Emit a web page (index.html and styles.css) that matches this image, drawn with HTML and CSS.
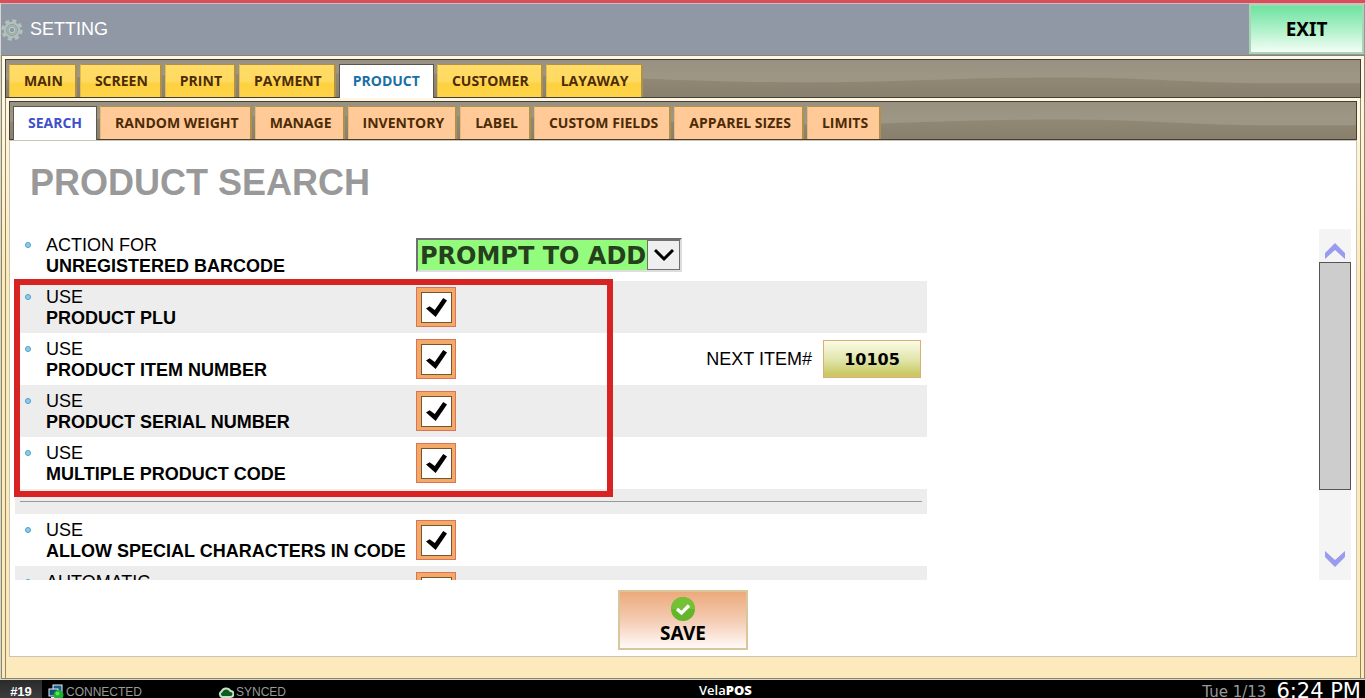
FILE: index.html
```
<!DOCTYPE html>
<html lang="en">
<head>
  <meta charset="UTF-8">
  <meta name="viewport" content="width=device-width, initial-scale=1.0">
  <title>VelaPOS - Setting</title>
  <link rel="stylesheet" href="styles.css">
</head>
<body>
  <!-- Title bar -->
  <header class="titlebar">
    <svg class="gear" viewBox="0 0 24 24">
      <circle cx="12" cy="12" r="10" fill="none" stroke="#b3c2bd" stroke-width="3.400" stroke-dasharray="4.400 3.454"/>
      <circle cx="12" cy="12" r="7" fill="#9fb0ac" stroke="#b0c0bb" stroke-width="4"/>
      <circle cx="12" cy="12" r="6" fill="none" stroke="#8b9c98" stroke-width="1"/>
      <circle cx="12" cy="12" r="3" fill="#8d99a2" stroke="#c6d2cd" stroke-width="1"/>
    </svg>
    <span class="title">SETTING</span>
    <button class="exit" type="button">EXIT</button>
  </header>

  <main class="window">
    <div class="pane">
      <!-- Main tabs -->
      <nav class="strip">
        <svg class="wave" viewBox="0 0 1356 38" preserveAspectRatio="none">
          <path d="M0 20 C200 13 420 12 580 17 C660 20 720 23 800 23 C900 23 950 18 1060 18 C1150 18 1180 24 1280 24 L1356 24 V38 H0 Z" fill="url(#shade)"/>
          <defs>
            <linearGradient id="shade" x1="0" y1="0" x2="0" y2="1">
              <stop offset="0" stop-color="#928a77"/>
              <stop offset="1" stop-color="#88806d"/>
            </linearGradient>
          </defs>
        </svg>
        <button class="tab" type="button">MAIN</button>
        <button class="tab" type="button">SCREEN</button>
        <button class="tab" type="button">PRINT</button>
        <button class="tab" type="button">PAYMENT</button>
        <button class="tab active" type="button">PRODUCT</button>
        <button class="tab" type="button">CUSTOMER</button>
        <button class="tab" type="button">LAYAWAY</button>
      </nav>

      <div class="inner">
        <!-- Product tabs -->
        <nav class="strip sub">
          <svg class="wave" viewBox="0 0 1356 38" preserveAspectRatio="none">
            <path d="M0 20 C200 13 420 12 580 17 C660 20 720 23 800 23 C900 23 950 18 1060 18 C1150 18 1180 24 1280 24 L1356 24 V38 H0 Z" fill="url(#shade)"/>
          </svg>
          <button class="tab active" type="button">SEARCH</button>
          <button class="tab" type="button">RANDOM WEIGHT</button>
          <button class="tab" type="button">MANAGE</button>
          <button class="tab" type="button">INVENTORY</button>
          <button class="tab" type="button">LABEL</button>
          <button class="tab" type="button">CUSTOM FIELDS</button>
          <button class="tab" type="button">APPAREL SIZES</button>
          <button class="tab" type="button">LIMITS</button>
        </nav>

        <section class="panel">
          <h1>PRODUCT SEARCH</h1>

          <div class="scroll-area">
            <div class="options">
              <div class="row">
                <label for="action">ACTION FOR<b>UNREGISTERED BARCODE</b></label>
                <div class="select-box">
                  <select id="action">
                    <option>PROMPT TO ADD</option>
                  </select>
                  <span class="arrow">
                    <svg viewBox="0 0 20 14"><path d="M1 2 L10 11 L19 2" fill="none" stroke="#000" stroke-width="3"/></svg>
                  </span>
                </div>
              </div>
              <div class="row shaded">
                <label for="plu">USE<b>PRODUCT PLU</b></label>
                <input type="checkbox" id="plu" checked>
              </div>
              <div class="row">
                <label for="item">USE<b>PRODUCT ITEM NUMBER</b></label>
                <input type="checkbox" id="item" checked>
                <div class="next-item">
                  <span>NEXT ITEM#</span>
                  <button type="button">10105</button>
                </div>
              </div>
              <div class="row shaded">
                <label for="serial">USE<b>PRODUCT SERIAL NUMBER</b></label>
                <input type="checkbox" id="serial" checked>
              </div>
              <div class="row">
                <label for="multi">USE<b>MULTIPLE PRODUCT CODE</b></label>
                <input type="checkbox" id="multi" checked>
              </div>
              <div class="divider"><hr></div>
              <div class="row">
                <label for="special">USE<b>ALLOW SPECIAL CHARACTERS IN CODE</b></label>
                <input type="checkbox" id="special" checked>
              </div>
              <div class="row shaded">
                <label for="auto">AUTOMATIC</label>
                <input type="checkbox" id="auto">
              </div>
            </div>
            <div class="highlight"></div>

            <div class="scrollbar">
              <button type="button" aria-label="Scroll up">
                <svg viewBox="0 0 20 16"><path d="M0 16 V10 L10 0 L20 10 V16 L10 7 Z" fill="#9a9aee"/></svg>
              </button>
              <div class="track"><div class="thumb"></div></div>
              <button type="button" aria-label="Scroll down">
                <svg viewBox="0 0 20 16"><path d="M0 0 V6 L10 16 L20 6 V0 L10 9 Z" fill="#9a9aee"/></svg>
              </button>
            </div>
          </div>

          <button class="save" type="button">
            <svg viewBox="0 0 24 24">
              <circle cx="12" cy="12" r="12" fill="#63b52a"/>
              <path d="M0 12 A12 12 0 0 1 24 12 Z" fill="#74c136"/>
              <path d="M6 12 L10.500 16 L18 8.500" fill="none" stroke="#fff" stroke-width="3.400"/>
            </svg>
            SAVE
          </button>
        </section>
      </div>
    </div>
  </main>

  <!-- Status bar -->
  <footer class="statusbar">
    <span class="station">#19</span>
    <span class="status connected">
      <svg viewBox="0 0 16 16">
        <rect x="5" y="1" width="9" height="7" fill="#1d5f8c" stroke="#e8f4fa"/>
        <rect x="1" y="5" width="9" height="7" fill="#174e78" stroke="#e8f4fa"/>
        <path d="M3 14 H8" stroke="#e8f4fa" stroke-width="2"/>
        <circle cx="10.500" cy="11" r="5" fill="#19b22b"/>
        <circle cx="9.500" cy="9.500" r="2" fill="#5fe066"/>
      </svg>
      CONNECTED
    </span>
    <span class="status synced">
      <svg viewBox="0 0 16 16">
        <path d="M4 13 A3 3 0 0 1 3.500 7.500 A5 5 0 0 1 12.500 7 A3 3 0 0 1 12.500 13 Z" fill="#0f5a1f" stroke="#c4e2c6" stroke-width="2"/>
      </svg>
      SYNCED
    </span>
    <span class="brand">Vela<b>POS</b></span>
    <span class="date">Tue 1/13</span>
    <span class="time">6:24 PM</span>
  </footer>
</body>
</html>
```
FILE: styles.css
```
*, *::before, *::after {
  box-sizing: border-box;
}
body {
  margin: 0;
  height: 100vh;
  display: flex;
  flex-direction: column;
  overflow: hidden;
  border-top: 3px solid #d94f58;
  background-color: #d9d6cc;
  font-family: "Liberation Sans", Arial, sans-serif;
  font-size: 18px;
  color: #000;
}
button {
  font-family: "Noto Sans", Tahoma, sans-serif;
  font-weight: bold;
  cursor: pointer;
}

/* Title bar */
.titlebar {
  display: flex;
  align-items: center;
  height: 52px;
  margin-left: 1px;
  border-top: 1px solid #d5b8cc;
  background-color: #9098a6;
  color: #fff;
}
.gear {
  width: 22px;
  height: 22px;
  margin-right: 7px;
}
.exit {
  width: 115px;
  height: 50px;
  margin-left: auto;
  margin-right: 1px;
  align-self: flex-start;
  border: 2px solid #a9d5b4;
  background: linear-gradient(#6ee2a0, #b4f2cd 55%, #f4fdf6);
  font-size: 19px;
}

/* Window and tabs */
.window {
  flex: 1;
  min-height: 0;
  display: flex;
  margin: 0 0 1px 1px;
  padding: 3px 3px 0;
  border: 1px solid #8b8568;
  background: linear-gradient(#fff8e8, #fff6e0 60px, #fceabd 220px);
}
.pane {
  flex: 1;
  display: flex;
  flex-direction: column;
  min-width: 0;
  border: 1px solid #94855a;
  border-width: 0 1px;
}
.strip {
  position: relative;
  display: flex;
  align-items: flex-end;
  gap: 3px;
  height: 39px;
  margin: 0 -1px;
  padding: 0 3px;
  border: 1px solid #463d34;
  background: linear-gradient(#989080, #9e9685 40%);
}
.wave {
  position: absolute;
  left: 0;
  top: 0;
  width: 100%;
  height: 100%;
}
.tab {
  position: relative;
  height: 33px;
  padding: 0 12px 2px 14px;
  border: 1px solid #b0914a;
  border-right-width: 2px;
  border-bottom: none;
  border-left-color: #e3bd4c;
  background: linear-gradient(#ffdc68, #ffda60 50%, #fdd13e 60%, #fed34a);
  color: #4d2b06;
  font-family: "Open Sans", "Segoe UI", sans-serif;
  font-size: 14px;
}
.tab.active {
  height: 34px;
  margin-bottom: -1px;
  padding: 0 13px 2px;
  border: 1px solid #5d564b;
  border-bottom: none;
  background: #fff;
  color: #1a6fa5;
}
.sub .tab {
  padding-right: 11px;
  background: #ffca98;
  border-left-color: #eab973;
}
.sub .tab.active {
  padding: 0 14px 2px;
  background: #fff;
  border-left-color: #5d564b;
  color: #4050c8;
}
.inner {
  flex: 1;
  min-height: 0;
  display: flex;
  flex-direction: column;
  padding: 3px 3px 21px;
}
.sub {
  margin: 0;
}

/* Panel */
.panel {
  flex: 1;
  min-height: 0;
  display: flex;
  flex-direction: column;
  padding: 21px 5px 6px;
  border: 1px solid #c9c5b4;
  background-color: #fff;
}
h1 {
  margin: 0 0 25px 15px;
  color: #999;
  font-size: 36px;
  line-height: 42px;
}
.scroll-area {
  position: relative;
  flex: 1;
  min-height: 0;
  display: flex;
  justify-content: space-between;
}
.options {
  width: 912px;
  overflow: hidden;
}
.row {
  position: relative;
  display: flex;
  align-items: center;
  height: 52px;
  padding: 0 6px 0 31px;
}
.row::before {
  content: "";
  position: absolute;
  left: 10px;
  top: 13px;
  width: 6px;
  height: 6px;
  border: 1px solid #4b9dcb;
  border-radius: 50%;
  background-color: #8fcdee;
}
.shaded, .divider {
  background-color: #ededed;
}
.row label {
  align-self: flex-start;
  width: 370px;
  padding-top: 6px;
  line-height: 21px;
}
.row label b {
  display: block;
}
.divider {
  height: 25px;
  padding: 12px 5px 0;
}
.divider hr {
  margin: 0;
  border: none;
  border-top: 1px solid #999;
}

/* Orange tick boxes */
.row input {
  appearance: none;
  display: grid;
  grid-template: 100% / 100%;
  place-items: center;
  width: 40px;
  height: 40px;
  margin: 0;
  padding: 1px 0 0 1px;
  border: 1px solid #d9735a;
  background-color: #f5a966;
}
.row input::before {
  content: "";
  grid-area: 1 / 1;
  width: 31px;
  height: 31px;
  border: 1px solid #75572f;
  background-color: #fff;
}
.row input:checked::after {
  content: "";
  grid-area: 1 / 1;
  width: 21px;
  height: 19px;
  background-color: #000;
  clip-path: polygon(0 55%, 17% 43%, 42% 63%, 82% 0, 100% 13%, 46% 100%);
}

.select-box {
  position: relative;
  width: 266px;
}
.select-box select {
  appearance: none;
  display: block;
  width: 100%;
  height: 34px;
  padding: 2px 0 0 2px;
  border: 2px solid #6f6f6f;
  border-right-color: #ddd;
  border-bottom-color: #ddd;
  border-radius: 0;
  background-color: #94fc7c;
  color: #24401d;
  font: bold 24px "DejaVu Sans", Verdana, sans-serif;
}
.arrow {
  position: absolute;
  top: 2px;
  right: 2px;
  width: 33px;
  height: 30px;
  display: grid;
  place-items: center;
  border: 1px solid #707070;
  background-color: #efefef;
  pointer-events: none;
}
.arrow svg {
  width: 20px;
  height: 14px;
}
.next-item {
  display: flex;
  align-items: center;
  gap: 11px;
  margin-left: auto;
}
.next-item button {
  width: 98px;
  height: 38px;
  padding: 0;
  border: 1px solid #dcae76;
  background: linear-gradient(#fafbe6, #dfe3a6 55%, #cacb66 90%, #d3c36c);
  font-family: "DejaVu Sans", Verdana, sans-serif;
  font-size: 16px;
}
/* Red frame round the product code options */
.highlight {
  position: absolute;
  left: -1px;
  top: 50px;
  width: 599px;
  height: 218px;
  border: 6px solid #d82323;
  pointer-events: none;
}

.scrollbar {
  display: flex;
  flex-direction: column;
  width: 32px;
  background-color: #f4f4f5;
}
.scrollbar button {
  display: grid;
  place-items: center;
  height: 33px;
  padding: 10px 0 0;
  border: none;
  background: none;
}
.scrollbar button:last-child {
  height: 43px;
  padding: 0;
}
.scrollbar svg {
  width: 20px;
  height: 16px;
}
.track {
  flex: 1;
}
.thumb {
  height: 83%;
  border: 1px solid #555;
  background-color: #cdcdcd;
}
.save {
  display: flex;
  flex-direction: column;
  align-items: center;
  align-self: center;
  width: 130px;
  height: 60px;
  margin-top: 10px;
  padding: 5px 0 0;
  border: 2px solid #d9c69d;
  background: linear-gradient(#ecaa7c, #f4cbb2 50%, #fffaf8);
  font-size: 19px;
  line-height: 24px;
}
.save svg {
  width: 24px;
  height: 24px;
}

/* Status bar */
.statusbar {
  display: flex;
  height: 18px;
  overflow: hidden;
  background-color: #000;
  color: #999;
  font-size: 12px;
  line-height: 24px;
}
.station {
  width: 42px;
  background: linear-gradient(#2a2a2a, #3c3c40);
  color: #fff;
  font-size: 13px;
  font-weight: bold;
  text-align: center;
}
.status {
  display: flex;
  gap: 2px;
  height: 24px;
  align-items: center;
}
.status svg {
  width: 16px;
  height: 16px;
}
.connected {
  width: 176px;
  padding-left: 6px;
}
.synced {
  width: 481px;
}
.brand {
  color: #fff;
  font-family: "Open Sans", "Segoe UI", sans-serif;
  font-size: 13px;
  font-weight: 600;
  line-height: 20px;
}
.date {
  margin-left: auto;
  font-family: "DejaVu Sans", Verdana, sans-serif;
  font-size: 15px;
}
.time {
  margin: 0 4px 0 10px;
  color: #fff;
  font-family: "DejaVu Sans", Verdana, sans-serif;
  font-size: 21px;
  line-height: 22px;
}
```
